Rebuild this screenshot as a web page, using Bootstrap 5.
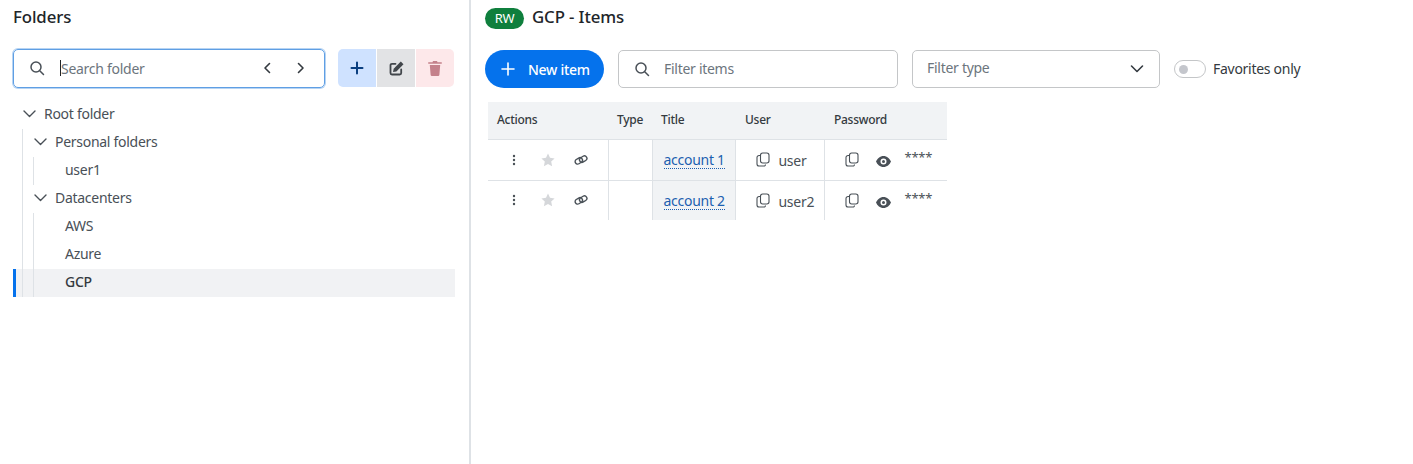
<!DOCTYPE html>
<html lang="en">
<head>
  <meta charset="UTF-8" />
  <title>GCP - Items</title>
  <link href="https://cdn.jsdelivr.net/npm/bootstrap@5.3.0/dist/css/bootstrap.min.css" rel="stylesheet" />
  <style>
    html, body { height: 100%; }
    body { font-family: "Noto Sans", "Open Sans", sans-serif; font-size: 14px; letter-spacing: -0.28px; color: #343a40; background: #fff; overflow: hidden; }
    .app-shell { height: 464px; }
    .folders-pane { width: 469px; flex: none; padding: 0 14px 0 13px; }
    .pane-divider { width: 2px; flex: none; background: #dee2e6; }
    .items-pane { padding: 0 0 0 14px; }
    .pane-title { font-size: 16.8px; font-weight: 500; color: #212529; line-height: 24px; margin: 0; letter-spacing: -0.1px; }
    .folders-title-row { height: 34px; padding-top: 5px; }
    .search-row { margin-top: 14px; height: 40px; }
    .search-box { width: 312px; height: 39px; border: 1px solid #5f9fe4; border-radius: 5px; box-shadow: 0 0 0 1px rgba(95,159,228,.45); padding: 0 18px 0 15px; color: #495057; }
    .search-input, .filter-input { border: 0; outline: 0; padding: 0; background: transparent; flex: 1; min-width: 0; font-size: 14px; letter-spacing: -0.28px; color: #495057; }
    .filter-input { padding-bottom: 2px; }
    .search-input::placeholder, .filter-input::placeholder { color: #6c757d; opacity: 1; }
    .search-caret { width: 1px; height: 16px; background: #212529; margin-left: 15px; }
    .tool-group { margin-left: 13px; }
    .tool-btn { width: 38px; height: 38px; border: 0; padding: 0; display: flex; align-items: center; justify-content: center; }
    .tool-btn + .tool-btn { margin-left: 1px; }
    .tool-add { background: #cfe2ff; color: #0a3f80; border-radius: 5px 0 0 5px; }
    .tool-edit { background: #e2e3e5; color: #41464b; }
    .tool-del { background: #fde8ea; color: #c4818b; border-radius: 0 5px 5px 0; }
    .folder-tree { margin-top: 13px; width: 442px; }
    .tree-row { height: 28px; display: flex; align-items: center; position: relative; color: #495057; padding-bottom: 4px; }
    .tree-row.is-active { background: #f1f2f4; color: #343a40; font-weight: 500; }
    .tree-row.is-active::before { content: ""; position: absolute; left: 0; top: 0; bottom: 0; width: 3px; background: #0572ec; }
    .tree-guide { position: absolute; top: 0; bottom: 0; width: 1px; background: #dee2e6; }
    .guide-a { left: 9px; }
    .guide-b { left: 20px; }
    .tree-chevron { position: absolute; top: 8px; }
    .lvl-0 { padding-left: 31px; }
    .lvl-1 { padding-left: 42px; }
    .lvl-2 { padding-left: 52px; }
    .head-row { height: 34px; }
    .rw-pill { background: #0f7f3d; color: #fff; font-size: 13px; border-radius: 11px; width: 39px; height: 21px; display: flex; align-items: center; justify-content: center; margin: 3px 8px 0 0; }
    .filters-row { margin-top: 16px; height: 38px; }
    .new-btn { width: 119px; height: 38px; border: 0; border-radius: 19px; background: #0572ec; color: #fff; font-weight: 500; font-size: 14px; letter-spacing: -0.28px; padding: 0 0 0 16px; gap: 13px; }
    .filter-box { height: 38px; border: 1px solid #c4c6c8; border-radius: 5px; color: #495057; }
    .filter-text { width: 280px; margin-left: 14px; padding-left: 15px; gap: 14px; }
    .filter-type { width: 248px; margin-left: 14px; padding: 0 15px 0 14px; color: #6c757d; }
    .filter-label { padding-bottom: 2px; }
    .filter-type .filter-label { padding-bottom: 3px; }
    .fav-toggle { margin-left: 14px; color: #343a40; }
    .fav-switch { width: 32px; height: 18px; border: 1px solid #c4c6c8; border-radius: 9px; margin-right: 7px; padding-left: 4px; }
    .fav-dot { width: 9px; height: 9px; border-radius: 50%; background: #c4c6cc; }
    .items-grid { width: 459px; margin: 14px 0 0 3px; table-layout: fixed; border-collapse: collapse; font-size: 14px; }
    .items-grid th { background: #f1f3f5; height: 37px; font-size: 12px; font-weight: 500; color: #343a40; padding: 0 0 0 9px; border-bottom: 1px solid #dee2e6; }
    .items-grid th.th-shift { padding-left: 10px; }
    .items-grid td { height: 41px; padding: 0; border-bottom: 1px solid #dee2e6; border-right: 1px solid #dee2e6; color: #495057; vertical-align: middle; }
    .items-grid tr:last-child td { border-bottom: 0; height: 40px; }
    .items-grid td:last-child { border-right: 0; }
    .items-grid td.title-cell { background: #f1f3f5; padding-left: 11px; }
    .title-link { color: #1c5fb0; text-decoration: none; border-bottom: 1px dotted #1c5fb0; line-height: 16px; display: inline-block; }
    .act-cell { padding-left: 24px; }
    .act-star { margin-left: 25px; }
    .act-link { margin-left: 19px; }
    .user-cell { padding-left: 20px; }
    .user-name { margin-left: 9px; position: relative; top: 1px; }
    .pw-mask { font-size: 13px; margin-left: 14px; position: relative; top: -2px; }
    .pw-eye { margin-left: 17px; }
    .pw-copy { margin-left: 20px; position: relative; top: -2px; }
  </style>
</head>
<body>

<div class="app-shell d-flex">

  <!-- Folders -->
  <div class="folders-pane">
    <div class="folders-title-row"><h1 class="pane-title">Folders</h1></div>
    <div class="search-row d-flex align-items-center">
      <div class="search-box d-flex align-items-center">
        <svg width="16" height="16" viewBox="0 0 16 16" fill="none" stroke="#495057" stroke-width="1.5" stroke-linecap="round"><circle cx="7" cy="7" r="5"/><path d="M11 11l3.5 3.5"/></svg>
        <span class="search-caret"></span>
        <input class="search-input" placeholder="Search folder" />
        <svg class="me-4" width="10" height="12" viewBox="0 0 10 12" fill="none" stroke="#343a40" stroke-width="1.6" stroke-linecap="round" stroke-linejoin="round"><path d="M7.5 1.5L3 6l4.5 4.5"/></svg>
        <svg width="10" height="12" viewBox="0 0 10 12" fill="none" stroke="#343a40" stroke-width="1.6" stroke-linecap="round" stroke-linejoin="round"><path d="M2.5 1.5L7 6l-4.5 4.5"/></svg>
      </div>
      <div class="tool-group d-flex">
        <button class="tool-btn tool-add" type="button"><svg width="14" height="14" viewBox="0 0 14 14" stroke="currentColor" stroke-width="2" stroke-linecap="round"><path d="M7 1.5v11M1.5 7h11"/></svg></button>
        <button class="tool-btn tool-edit" type="button"><svg width="15" height="15" viewBox="0 0 15 15" fill="none" stroke="currentColor" stroke-width="1.8" stroke-linecap="round" stroke-linejoin="round"><path d="M6.500 2.800H3A1.500 1.500 0 0 0 1.500 4.300V12A1.500 1.500 0 0 0 3 13.500h7.700a1.500 1.500 0 0 0 1.500-1.500V8.500"/><path fill="currentColor" stroke="none" d="M11.800.6l2.700 2.700-7.100 7.100-3.400.7.700-3.400z"/></svg></button>
        <button class="tool-btn tool-del" type="button"><svg width="14" height="15" viewBox="0 0 14 15" fill="currentColor"><path d="M5 0h4l.5 1.200h3.700a.7.700 0 0 1 0 1.600H.8a.7.700 0 0 1 0-1.600h3.700zM1.800 4h10.400l-.8 9.800a1.300 1.300 0 0 1-1.300 1.200H3.900a1.300 1.300 0 0 1-1.300-1.200z"/></svg></button>
      </div>
    </div>

    <div class="folder-tree">
      <div class="tree-row lvl-0">
        <svg class="tree-chevron" style="left:10px" width="13" height="10" viewBox="0 0 13 10" fill="none" stroke="#495057" stroke-width="1.400" stroke-linecap="round" stroke-linejoin="round"><path d="M1 2l5.500 5.500L12 2"/></svg>Root folder</div>
      <div class="tree-row lvl-1"><span class="tree-guide guide-a"></span>
        <svg class="tree-chevron" style="left:21px" width="13" height="10" viewBox="0 0 13 10" fill="none" stroke="#495057" stroke-width="1.400" stroke-linecap="round" stroke-linejoin="round"><path d="M1 2l5.500 5.500L12 2"/></svg>Personal folders</div>
      <div class="tree-row lvl-2"><span class="tree-guide guide-a"></span><span class="tree-guide guide-b"></span>user1</div>
      <div class="tree-row lvl-1"><span class="tree-guide guide-a"></span>
        <svg class="tree-chevron" style="left:21px" width="13" height="10" viewBox="0 0 13 10" fill="none" stroke="#495057" stroke-width="1.400" stroke-linecap="round" stroke-linejoin="round"><path d="M1 2l5.500 5.500L12 2"/></svg>Datacenters</div>
      <div class="tree-row lvl-2"><span class="tree-guide guide-a"></span><span class="tree-guide guide-b"></span>AWS</div>
      <div class="tree-row lvl-2"><span class="tree-guide guide-a"></span><span class="tree-guide guide-b"></span>Azure</div>
      <div class="tree-row lvl-2 is-active"><span class="tree-guide guide-a"></span><span class="tree-guide guide-b"></span>GCP</div>
    </div>
  </div>

  <div class="pane-divider"></div>

  <!-- Items -->
  <div class="items-pane flex-grow-1">
    <div class="head-row d-flex align-items-center">
      <span class="rw-pill">RW</span>
      <h2 class="pane-title">GCP - Items</h2>
    </div>

    <div class="filters-row d-flex align-items-center">
      <button class="new-btn d-flex align-items-center" type="button">
        <svg width="14" height="14" viewBox="0 0 14 14" stroke="#fff" stroke-width="1.600" stroke-linecap="round"><path d="M7 1v12M1 7h12"/></svg>
        New item
      </button>
      <div class="filter-box filter-text d-flex align-items-center">
        <svg width="16" height="16" viewBox="0 0 16 16" fill="none" stroke="#495057" stroke-width="1.500" stroke-linecap="round"><circle cx="7" cy="7" r="5"/><path d="M11 11l3.500 3.500"/></svg>
        <input class="filter-input" placeholder="Filter items" />
      </div>
      <div class="filter-box filter-type d-flex align-items-center justify-content-between">
        <span class="filter-label">Filter type</span>
        <svg width="14" height="10" viewBox="0 0 14 10" fill="none" stroke="#343a40" stroke-width="1.600" stroke-linecap="round" stroke-linejoin="round"><path d="M1.500 2l5.500 5.500L12.500 2"/></svg>
      </div>
      <div class="fav-toggle d-flex align-items-center">
        <span class="fav-switch d-flex align-items-center"><span class="fav-dot"></span></span>
        <span class="filter-label">Favorites only</span>
      </div>
    </div>

    <table class="items-grid">
      <colgroup><col style="width:120px"><col style="width:44px"><col style="width:83px"><col style="width:89px"><col style="width:123px"></colgroup>
      <thead>
        <tr><th>Actions</th><th>Type</th><th>Title</th><th class="th-shift">User</th><th class="th-shift">Password</th></tr>
      </thead>
      <tbody id="itemRows"></tbody>
    </table>
  </div>
</div>

<script>
  const copyIcon = '<svg width="14" height="15" viewBox="0 0 14 15" fill="none" stroke="#495057" stroke-width="1.100" stroke-linejoin="round"><rect x="4.500" y="1" width="8.500" height="10" rx="2.200"/><path d="M4.500 3.500H3A2 2 0 0 0 1 5.500V12a2 2 0 0 0 2 2h5a1.500 1.500 0 0 0 1.500-1.500"/></svg>';
  const dotsIcon = '<svg width="4" height="12" viewBox="0 0 4 12" fill="#495057"><circle cx="2" cy="2" r="1.200"/><circle cx="2" cy="6" r="1.200"/><circle cx="2" cy="10" r="1.200"/></svg>';
  const starIcon = '<svg class="act-star" width="14" height="14" viewBox="0 0 14 14" fill="#d5d7da"><path d="M7 .6l2 4.200 4.600.6-3.400 3.200.9 4.600L7 11l-4.100 2.200.9-4.600L.4 5.400 5 4.800z"/></svg>';
  const linkIcon = '<svg class="act-link" width="14" height="12" viewBox="0 0 14 12" fill="none" stroke="#495057" stroke-width="1.400"><rect x="0.900" y="4.400" width="7.800" height="5" rx="2.500" transform="rotate(-32 4.800 6.900)"/><rect x="5.300" y="2.600" width="7.800" height="5" rx="2.500" transform="rotate(-32 9.200 5.100)"/></svg>';
  const eyeIcon = '<svg width="15" height="11" viewBox="0 0 15 11" fill="#495057"><path fill-rule="evenodd" d="M7.500 0C11 0 13.700 2.500 15 5.500 13.700 8.500 11 11 7.500 11S1.300 8.500 0 5.500C1.300 2.500 4 0 7.500 0zm0 2.500a3 3 0 1 0 0 6 3 3 0 0 0 0-6z"/><circle cx="7.500" cy="5.500" r="1.500"/></svg>';

  const items = [
    { title: 'account 1', user: 'user' },
    { title: 'account 2', user: 'user2' }
  ];

  document.getElementById('itemRows').innerHTML = items.map(item => `
    <tr>
      <td><div class="act-cell d-flex align-items-center">${dotsIcon}${starIcon}${linkIcon}</div></td>
      <td></td>
      <td class="title-cell"><a class="title-link" href="#">${item.title}</a></td>
      <td><div class="user-cell d-flex align-items-center">${copyIcon}<span class="user-name">${item.user}</span></div></td>
      <td><div class="d-flex align-items-center"><span class="pw-copy">${copyIcon}</span><span class="pw-eye">${eyeIcon}</span><span class="pw-mask">****</span></div></td>
    </tr>`).join('');
</script>

</body>
</html>
